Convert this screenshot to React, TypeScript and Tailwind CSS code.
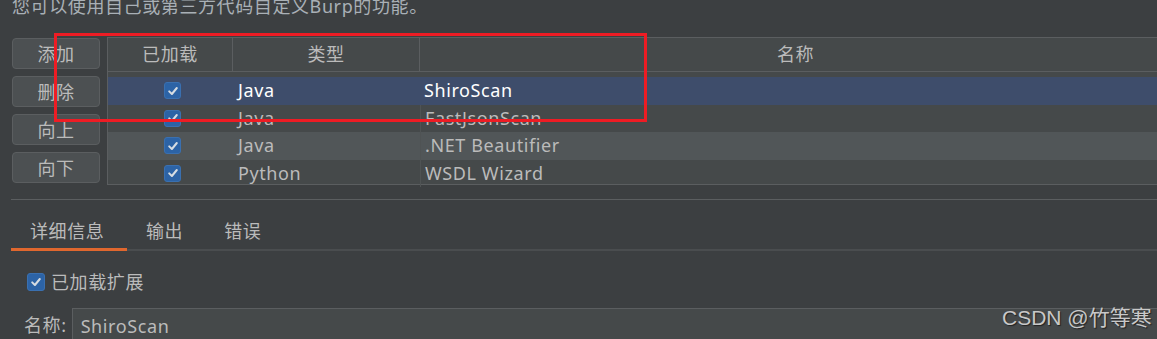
import React from 'react';

const font = { fontFamily: '"Noto Sans", "Noto Sans CJK SC", sans-serif' };

const rows = [
  { type: 'Java', name: 'ShiroScan', selected: true },
  { type: 'Java', name: 'FastJsonScan' },
  { type: 'Java', name: '.NET Beautifier', alt: true },
  { type: 'Python', name: 'WSDL Wizard' }
];

const Check = ({ size = 17 }: { size?: number }) => (
  <span
    className="inline-flex items-center justify-center rounded-[3px] bg-[#2c63a6] border border-[#3a70b0]"
    style={{ width: size, height: size }}
  >
    <svg width="12" height="12" viewBox="0 0 12 12" fill="none">
      <path d="M2.2 6.4 L4.9 9 L9.8 3" stroke="#d6dce2" strokeWidth="2" strokeLinecap="round" strokeLinejoin="round" />
    </svg>
  </span>
);

const Btn = ({ label }: { label: string }) => (
  <button className="h-[31px] w-[88px] rounded-[4px] border border-[#5b5e60] bg-[#4c5052] text-[18px] text-[#bbbbbb] leading-none tracking-[0.5px]">
    {label}
  </button>
);

const App = () => {
  return (
    <div className="relative w-[1157px] h-[339px] overflow-hidden bg-[#3c3f41] text-[#bbbbbb] tracking-[0.6px]" style={font}>
      <p className="mt-[-6px] ml-[12px] text-[18px] leading-[24px] text-[#a9b0b6] whitespace-nowrap">
        您可以使用自己或第三方代码自定义Burp的功能。
      </p>

      <div className="flex mt-[19px] ml-[12px]">
        <div className="flex flex-col gap-[7px] pt-[1px]">
          <Btn label="添加" />
          <Btn label="删除" />
          <Btn label="向上" />
          <Btn label="向下" />
        </div>

        <div className="ml-[7px] flex-1 border-l border-t border-b border-[#5b5e60] bg-[#45494a] h-[148px]">
          <div className="flex h-[34px] border-b border-[#5b5e60] text-[18px]">
            <div className="w-[125px] flex items-center justify-center border-r border-[#5b5e60]">已加载</div>
            <div className="w-[187px] flex items-center justify-center border-r border-[#5b5e60]">类型</div>
            <div className="flex-1 flex items-center justify-center pl-[14px]">名称</div>
          </div>
          <div className="pt-[5px]">
            {rows.map((r, i) => (
              <div
                key={i}
                className={`flex h-[27.5px] text-[18px] ${r.selected ? 'bg-[#3e4d6b] text-white' : r.alt ? 'bg-[#515658]' : ''}`}
              >
                <div className="w-[125px] flex items-center justify-center pl-[4px]">
                  <Check />
                </div>
                <div className="w-[187px] flex items-center pl-[5px]">{r.type}</div>
                <div className={`flex-1 flex items-center pl-[4px] ${r.selected ? '' : 'border-l border-[#4f5354]'}`}>
                  {r.name}
                </div>
              </div>
            ))}
          </div>
        </div>
      </div>

      <div className="ml-[11px] mt-[14px] border-t border-[#5b5e60]" />

      <div className="ml-[11px] mt-[19px] flex border-b-2 border-[#4a4d4f] text-[18px]">
        <div className="w-[116px] pl-[19px] pb-[4px] border-b-[3px] border-[#e0672e] -mb-[2px] leading-[25px]">详细信息</div>
        <div className="ml-[19px] pb-[4px] leading-[25px]">输出</div>
        <div className="ml-[41px] pb-[4px] leading-[25px]">错误</div>
      </div>

      <div className="flex items-center ml-[27px] mt-[21px] text-[18px]">
        <Check size={18} />
        <span className="ml-[6px] leading-[20px]">已加载扩展</span>
      </div>

      <div className="flex items-start ml-[24px] mt-[16px] text-[18px]">
        <span className="mt-[6px] leading-[22px]">名称:</span>
        <div className="ml-[5px] flex-1 h-[40px] border-l border-t border-[#5b5e60] bg-[#45494a] pl-[8px] pt-[6px] leading-[22px]">
          ShiroScan
        </div>
      </div>

      <div
        className="absolute left-[1002px] top-[304px] text-[21px] text-[#c8c8c8] whitespace-nowrap leading-[28px] tracking-normal"
        style={{ fontFamily: '"Liberation Sans", "Noto Sans CJK SC", sans-serif', textShadow: '1px 1px 1px #222' }}
      >
        CSDN @竹等寒
      </div>

      <div className="absolute left-[54px] top-[33px] w-[593px] h-[89px] border-[3px] border-[#ee1c24]" />
    </div>
  );
};

export default App;
